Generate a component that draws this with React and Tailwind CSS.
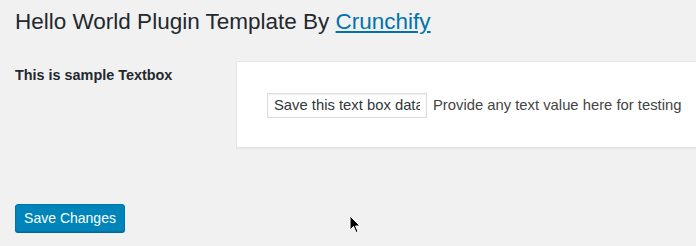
import React from "react";

function Cursor() {
  return (
    <svg className="absolute left-[349px] top-[215px]" width="12" height="19" viewBox="0 0 12 19">
      <path d="M1 1 L1 15 L4.5 11.5 L7 17.5 L9 16.6 L6.6 11 L11 11 Z" fill="#000" stroke="#fff" strokeWidth="1" />
    </svg>
  );
}

export default function App() {
  return (
    <div className="relative w-[696px] h-[246px] overflow-hidden bg-[#f1f1f1] text-[#23282d]" style={{ fontFamily: "'Liberation Sans', Arial, sans-serif" }}>
      <h1 className="pl-[15px] pt-[7px] text-[22.5px] leading-[29px] font-normal">
        Hello World Plugin Template By <a href="#" className="text-[#0073aa] underline">Crunchify</a>
      </h1>
      <div className="flex mt-[25px]">
        <div className="w-[236px] pl-[15px] pt-[4px] text-[14.4px] font-bold">This is sample Textbox</div>
        <div className="flex-1 h-[87px] bg-white shadow-[0_1px_1px_rgba(0,0,0,0.04)] border border-[#e5e5e5] border-r-0 flex items-center pl-[30px] pt-[1px]">
          <input
            type="text"
            defaultValue="Save this text box data"
            className="w-[160px] h-[25px] px-[6px] border border-[#ddd] shadow-[inset_0_1px_2px_rgba(0,0,0,0.07)] text-[14.8px] text-[#32373c] outline-none"
            style={{ fontFamily: "'Liberation Sans', Arial, sans-serif" }}
          />
          <span className="ml-[6px] text-[14.8px] text-[#444]">Provide any text value here for testing</span>
        </div>
      </div>
      <div className="pl-[15px] mt-[56px]">
        <button className="w-[110px] h-[28px] bg-[#0085ba] border border-[#0073aa] rounded-[3px] text-white text-[14px] font-medium shadow-[0_1px_0_#006799]">
          Save Changes
        </button>
      </div>
      <Cursor />
    </div>
  );
}
